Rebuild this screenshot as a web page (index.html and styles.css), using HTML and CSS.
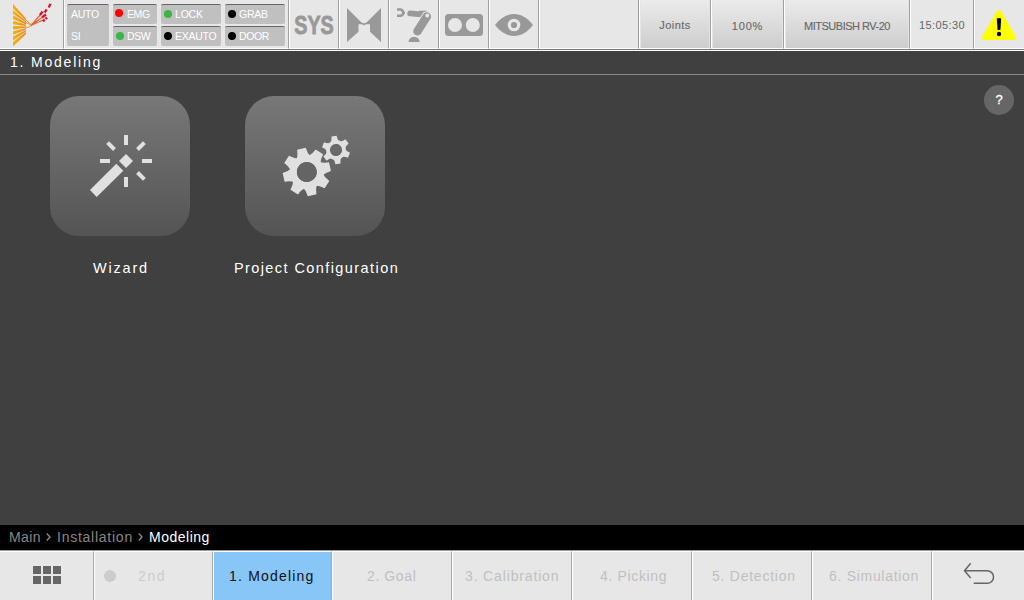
FILE: index.html
```html
<!DOCTYPE html>
<html lang="en">
<head>
<meta charset="utf-8">
<title>Modeling</title>
<link rel="stylesheet" href="styles.css">
</head>
<body>
<div class="app">
  <header class="topbar">
    <div class="cell logo">
      <svg width="62" height="48" viewBox="0 0 62 48">
        <defs><linearGradient id="fan" x1="13" x2="27" y1="0" y2="0" gradientUnits="userSpaceOnUse"><stop offset="0" stop-color="#f9b200"/><stop offset="1" stop-color="#ee8320"/></linearGradient></defs>
        <g fill="url(#fan)">
          <path d="M13 4L26 18.500V20.500L13 8.500Z"/><path d="M13 10L26 21V22.600L13 13.700Z"/><path d="M13 15.300L26 23V24.400L13 19Z"/><path d="M13 20.700L26 24.700V26L13 24.200Z"/><path d="M13 26L26 26.400V27.800L13 29.500Z"/><path d="M13 31.300L26 28.200V29.600L13 34.800Z"/><path d="M13 36.600L26 30V31.600L13 40.400Z"/><path d="M13 42L26 32V34L13 46.500Z"/>
        </g>
        <path d="M25 19L32 25.500M25 22L32 25.500L26 28" fill="none" stroke="#f0902a" stroke-width="1"/>
        <path d="M31 25.500L41 14M31 25.500L42 17.500M31 25.500L43 20" stroke="#e5643a" stroke-width="1.200"/>
        <path d="M40 15L42.500 11.500M48.700 7.500L50.500 3.800M44.500 12.500L46.700 9.500M42 17.500L46 14.500M43 21.500L44.500 19.500M45.500 19L47 17.500" stroke="#dc1226" stroke-width="2.300"/>
      </svg>
    </div>
    <div class="cell status">
      <div class="flag tall"><span class="t-auto">AUTO</span><span class="t-auto">SI</span></div>
      <div class="pair narrow">
        <div class="flag"><i class="led red"></i><span class="t-emg">EMG</span></div>
        <div class="flag"><i class="led green"></i><span class="t-dsw">DSW</span></div>
      </div>
      <div class="pair">
        <div class="flag"><i class="led green"></i><span class="t-lock">LOCK</span></div>
        <div class="flag"><i class="led"></i><span class="t-exauto">EXAUTO</span></div>
      </div>
      <div class="pair">
        <div class="flag"><i class="led"></i><span class="t-grab">GRAB</span></div>
        <div class="flag"><i class="led"></i><span class="t-door">DOOR</span></div>
      </div>
    </div>
    <div class="cell tool"><span class="sys">SYS</span></div>
    <div class="cell tool">
      <svg width="48" height="48" viewBox="340 0 48 48"><path fill="#999" d="M347 8L361 22Q364 24.500 367 22L381 8V42L370 31.800V24.200L366 24.200L364 25.500L362 24.200H358.500V31.800L347 42Z"/></svg>
    </div>
    <div class="cell tool">
      <svg width="48" height="48" viewBox="390 0 48 48">
        <path d="M397 9.500H400.500A3.200 3.200 0 0 1 400.500 15.800H397M403.500 12.600H405" fill="none" stroke="#999" stroke-width="2.400"/>
        <path d="M410 13.400L421 14.400" stroke="#999" stroke-width="5.600" stroke-linecap="round"/>
        <path d="M419 11.500H427" stroke="#999" stroke-width="1.600"/>
        <path d="M426.800 16.500L417.500 31.200" stroke="#e7e7e7" stroke-width="10.500" stroke-linecap="round"/>
        <path d="M426.800 16.500L417.500 31.200" stroke="#999" stroke-width="8.500" stroke-linecap="round"/>
        <circle cx="427.300" cy="15.500" r="2" fill="#e7e7e7"/>
        <path fill="#999" d="M408.500 42A5.600 5.300 0 0 1 419.700 42Z"/>
      </svg>
    </div>
    <div class="cell tool">
      <svg width="48" height="48" viewBox="440 0 48 48"><rect x="445" y="14" width="38" height="22" rx="3.500" fill="#999"/><circle cx="455" cy="25" r="7" fill="#e7e7e7"/><circle cx="472.800" cy="25" r="7" fill="#e7e7e7"/></svg>
    </div>
    <div class="cell tool">
      <svg width="48" height="48" viewBox="490 0 48 48"><path fill="#999" d="M495 25C506 10.300 522 10.300 533 25C522 39.700 506 39.700 495 25Z"/><circle cx="514" cy="25" r="4.700" fill="#999" stroke="#e7e7e7" stroke-width="3.200"/></svg>
    </div>
    <div class="cell spacer"></div>
    <div class="cell raised w-joints"><span class="t-joints">Joints</span></div>
    <div class="cell raised w-speed"><span class="t-speed">100%</span></div>
    <div class="cell raised w-robot"><span class="t-robot">MITSUBISH RV-20</span></div>
    <div class="cell clock"><span class="t-clock">15:05:30</span></div>
    <div class="cell alert">
      <svg width="49" height="48" viewBox="975 0 49 48"><path d="M999 12.500L1013.500 37.500H984.500Z" fill="#ff0" stroke="#ff0" stroke-width="5" stroke-linejoin="round"/><path d="M996.800 18.500Q999 17.300 1001.200 18.500L1000.400 30H997.600Z"/><circle cx="999" cy="34" r="2.200"/></svg>
    </div>
  </header>
  <h1 class="title">1. Modeling</h1>
  <main class="content">
    <div class="item">
      <div class="tile">
        <svg width="140" height="140" viewBox="0 0 140 140">
          <g fill="#e0e0e0"><path d="M76 58L83 65L76 72L69 65Z"/><path d="M66.300 67.700L73.300 74.700L46.700 101L40 94Z"/><path d="M74 39h4v10h-4zM74 81h4v10h-4zM50 63h10v4h-10zM92 63h10v4h-10z"/></g>
          <path d="M57.600 46.600L64.500 53.500M94.400 46.600L87.500 53.500M87.500 76.500L94.400 83.400" stroke="#e0e0e0" stroke-width="4"/>
        </svg>
      </div>
      <span class="caption t-wizard">Wizard</span>
    </div>
    <div class="item">
      <div class="tile">
        <svg width="140" height="140" viewBox="0 0 140 140">
          <defs>
            <path id="tb" d="M-7 -14.500Q-4.800 -18 -4.400 -23.800H4.400Q4.800 -18 7 -14.500Z"/>
            <path id="ts" d="M-4.300 -8Q-2.700 -10 -2.600 -14H2.600Q2.700 -10 4.300 -8Z"/>
          </defs>
          <g fill="#e0e0e0" transform="translate(61.800 76) rotate(-13)">
            <use href="#tb"/><use href="#tb" transform="rotate(45)"/><use href="#tb" transform="rotate(90)"/><use href="#tb" transform="rotate(135)"/><use href="#tb" transform="rotate(180)"/><use href="#tb" transform="rotate(225)"/><use href="#tb" transform="rotate(270)"/><use href="#tb" transform="rotate(315)"/>
            <circle r="13.500" fill="none" stroke="#e0e0e0" stroke-width="7"/>
          </g>
          <g fill="#e0e0e0" transform="translate(91 54) rotate(-8)">
            <use href="#ts"/><use href="#ts" transform="rotate(60)"/><use href="#ts" transform="rotate(120)"/><use href="#ts" transform="rotate(180)"/><use href="#ts" transform="rotate(240)"/><use href="#ts" transform="rotate(300)"/>
            <circle r="7.900" fill="none" stroke="#e0e0e0" stroke-width="4"/>
          </g>
          <circle cx="61.800" cy="76" r="10" fill="#646464"/>
          <circle cx="91" cy="54" r="5.900" fill="#6a6a6a"/>
        </svg>
      </div>
      <span class="caption t-project">Project Configuration</span>
    </div>
    <div class="help">?</div>
  </main>
  <nav class="crumbs">
    <span class="c-main">Main</span>
    <svg class="chev" width="5" height="8" viewBox="0 0 5 8"><path d="M.8 .6L4 4L.8 7.400"/></svg>
    <span class="c-inst">Installation</span>
    <svg class="chev" width="5" height="8" viewBox="0 0 5 8"><path d="M.8 .6L4 4L.8 7.400"/></svg>
    <span class="c-here">Modeling</span>
  </nav>
  <footer class="tabs">
    <div class="tab menu"><svg width="28" height="18" viewBox="0 0 28 18"><path fill="#666" d="M0 0h8v8H0zM10 0h8v8h-8zM20 0h8v8h-8zM0 10h8v8H0zM10 10h8v8h-8zM20 10h8v8h-8z"/></svg></div>
    <div class="tab second"><i class="dot"></i><span>2nd</span></div>
    <div class="tab active"><span>1. Modeling</span></div>
    <div class="tab goal"><span>2. Goal</span></div>
    <div class="tab calib"><span>3. Calibration</span></div>
    <div class="tab pick"><span>4. Picking</span></div>
    <div class="tab detect"><span>5. Detection</span></div>
    <div class="tab simul"><span>6. Simulation</span></div>
    <div class="tab back"><svg width="34" height="24" viewBox="961 561 34 24"><path d="M969.700 563.300L963.500 570.800L969.700 578M963.500 570.800H986.300A6.250 6.250 0 0 1 986.300 583.300H972.700" fill="none" stroke="#666" stroke-width="1.500"/></svg></div>
  </footer>
</div>
</body>
</html>
```
FILE: styles.css
```css
* { box-sizing: border-box; }
body { margin: 0; background: #404040; font-family: "Liberation Sans", Arial, sans-serif; }
svg { display: block; flex: none; }
span { white-space: nowrap; }
.app { width: 1024px; height: 600px; display: flex; flex-direction: column; overflow: hidden; background: #404040; }

.topbar { display: flex; height: 51px; flex: none; background: #e7e7e7; border-bottom: 1px solid #fff; box-shadow: inset 0 -1px #777; }
.cell { height: 49px; flex: none; display: flex; align-items: center; justify-content: center; border-left: 1px solid #fff; border-right: 1px solid #a0a0a0; border-bottom: 1px solid #fff; color: #666; font-size: 11px; }
.logo { width: 64px; border-left: 0; justify-content: flex-start; }
.status { width: 225px; padding: 4px 0 2px 2px; gap: 4px; justify-content: flex-start; align-items: stretch; color: #fff; font-size: 10.5px; }
.tool { width: 50px; }
.spacer { width: 100px; }
.raised { background: linear-gradient(#ebebeb, #cdcdcd); box-shadow: inset 1px 0 #e4e4e4, inset -1px 0 #e4e4e4; -webkit-text-stroke: .1px #666; }
.w-joints { width: 72px; }
.w-speed { width: 73px; }
.w-robot { width: 126px; }
.clock { width: 64px; }
.alert { width: 50px; border-right: 0; }

.pair { display: flex; flex-direction: column; width: 60px; gap: 2px; }
.narrow { width: 44px; }
.flag { display: flex; align-items: center; height: 20px; padding: 0 0 2px 3px; background: #c0c0c0; border-top: 1px solid #666; border-radius: 2px; }
.tall { width: 42px; height: 42px; flex-direction: column; align-items: flex-start; justify-content: space-between; padding: 0 0 0 4px; }
.led { width: 8px; height: 8px; flex: none; margin: 0 3px 0 0; border-radius: 50%; background: #000; }
.red { background: #f00; margin: 0 4px 1px -1px; }
.green { background: #39b54a; }
.t-auto { letter-spacing: -.3px; line-height: 19px; }
.t-emg { letter-spacing: -.4px; }
.t-dsw { letter-spacing: -.4px; }
.t-lock { letter-spacing: -.2px; }
.t-exauto { letter-spacing: -.25px; }
.t-grab { letter-spacing: -.25px; }
.t-door { letter-spacing: -.4px; }
.sys { font-weight: bold; font-size: 26px; color: #999; transform: scaleX(.76); -webkit-text-stroke: .9px #999; padding-top: 2px; }
.t-joints { letter-spacing: .5px; padding-top: 1px; }
.t-speed { letter-spacing: .8px; padding-top: 3px; }
.t-robot { letter-spacing: -.5px; padding-top: 3px; }
.t-clock { letter-spacing: .4px; padding-top: 1px; }

.title { margin: 0; height: 24px; flex: none; padding-left: 10px; border-bottom: 1px solid #888; color: #fff; font-size: 14px; font-weight: normal; line-height: 23px; letter-spacing: 1.8px; }
.content { flex: 1; display: flex; padding: 21px 10px 0 50px; gap: 55px; }
.item { width: 140px; display: flex; flex-direction: column; align-items: center; gap: 22px; }
.tile { width: 140px; height: 140px; border-radius: 29px; background: linear-gradient(#787878, #545454); }
.caption { color: #fff; font-size: 14.5px; line-height: 20px; }
.t-wizard { letter-spacing: 1.8px; padding-left: 2px; }
.t-project { letter-spacing: 1.42px; padding-left: 3px; }
.help { width: 30px; height: 30px; margin: -11px 0 0 auto; border-radius: 50%; background: #666; color: #fff; font-size: 13px; line-height: 30px; text-align: center; -webkit-text-stroke: .3px #fff; }

.crumbs { display: flex; align-items: center; height: 25px; flex: none; padding: 0 0 2px 9px; background: #000; color: #888; font-size: 14px; }
.chev { width: 5px; margin: 1px 6px 0 5px; fill: none; stroke: #888; stroke-width: 1.4; }
.c-main { width: 32px; letter-spacing: .4px; }
.c-inst { width: 76px; letter-spacing: .75px; }
.c-here { letter-spacing: .5px; color: #fff; }

.tabs { display: flex; height: 50px; flex: none; border-top: 1px solid #999; background: #e7e7e7; }
.tab { width: 120px; height: 49px; flex: none; display: flex; align-items: center; border-left: 1px solid #fff; border-top: 1px solid #fff; border-right: 1px solid #a8a8a8; color: #c0c0c0; font-size: 14px; }
.menu { width: 94px; border-left: 0; padding: 0 0 2px 33px; }
.second { width: 119px; padding-left: 9px; letter-spacing: 1.6px; color: #ccc; }
.dot { width: 12px; height: 12px; margin-right: 22px; border-radius: 50%; background: #ccc; }
.active { width: 119px; padding-left: 15px; letter-spacing: 1.2px; color: #111; background: #88c6f8; background-clip: padding-box; }
.goal { padding-left: 34px; letter-spacing: .6px; }
.calib { padding-left: 12px; letter-spacing: .85px; }
.pick { padding-left: 27px; letter-spacing: .65px; }
.detect { padding-left: 19px; letter-spacing: .75px; }
.simul { padding-left: 16px; letter-spacing: .7px; }
.back { width: 92px; border-right: 0; padding: 0 0 6px 29px; }
```
